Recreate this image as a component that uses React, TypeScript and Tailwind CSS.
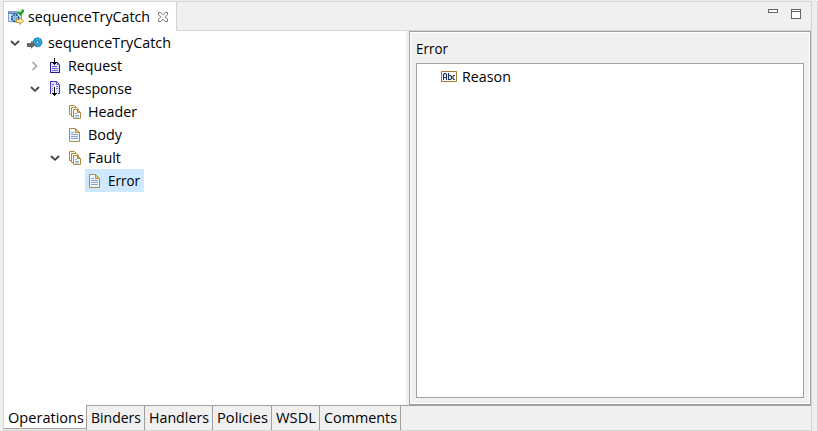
import type { ReactNode } from 'react';

function Label({ text, width }: { text: string; width: number }) {
  return (
    <svg width={width} height="20" className="block shrink-0 overflow-visible">
      <text x="0" y="15" textLength={width} lengthAdjust="spacingAndGlyphs" fill="#000">{text}</text>
    </svg>
  );
}

function Chevron({ open }: { open?: boolean }) {
  return open ? (
    <svg width="10" height="8" viewBox="0 0 10 8" fill="none" className="ml-px block"><path d="M1 2l4 3.8L9 2" stroke="#404040" strokeWidth="1.8" /></svg>
  ) : (
    <svg width="10" height="10" viewBox="0 0 10 10" fill="none" className="block"><path d="M3.5 1l4 4-4 4" stroke="#a6a6a6" strokeWidth="1.6" /></svg>
  );
}

function GearArrow() {
  return (
    <svg width="16" height="16" viewBox="0 0 16 16" className="block">
      <circle cx="10.5" cy="7.2" r="4.3" fill="#168bc8" stroke="#1c84bd" strokeWidth="1.4" strokeDasharray="2.4 .8" />
      <circle cx="10.5" cy="7.2" r="3.4" fill="#35aee4" />
      <circle cx="10.5" cy="7.2" r="1.5" fill="#d9edf5" stroke="#12628c" />
      <path d="M0 8h4V5.8l4.5 4-4.5 4V12H0z" fill="#666" />
    </svg>
  );
}

function MessageIcon({ out }: { out?: boolean }) {
  return (
    <svg width="16" height="16" viewBox="-1 0 16 16" className="block" shapeRendering="crispEdges">
      {out ? (
        <>
          <path d="M2.5.5h6l3 3v9h-9z" fill="#e2e2ff" stroke="#4038c8" />
          <path d="M8.5.5v3h3M4 3.5h2M4 5.5h2M8 5.5h2M4 7.5h2M8 7.5h2M4 9.5h2" fill="none" stroke="#7771d8" />
          <path d="M5 5h3v7h2v2H9v1H8v1H5v-1H4v-1H3v-2h2z" fill="#fff" />
          <path d="M6 6h1v6h2v1H8v1H7v1H6v-1H5v-1H4v-1h2z" fill="#000" />
        </>
      ) : (
        <>
          <path d="M2.5 4.5h7l2 2v8h-9z" fill="#e2e2ff" stroke="#241c9b" />
          <path d="M9.5 4.5v2h2M4 8.5h5M4 10.5h6M4 12.5h6" fill="none" stroke="#6e66d2" />
          <path d="M6 0h1v4h2v1H8v1H7v1H6V6H5V5H4V4h2z" fill="#000" />
        </>
      )}
    </svg>
  );
}

function DocumentIcon() {
  return (
    <svg width="16" height="16" viewBox="0 0 16 16" className="block overflow-visible">
      <path d="M2.5 1.5h6l4 4v9h-10z" fill="#f1f7ff" stroke="#a78b4e" />
      <path d="M8.5 1.5v4h4z" fill="#e6c46e" stroke="#b89140" />
      <path d="M4 5.5h3M4 7.5h7M4 9.5h7M4 11.5h7" stroke="#86a4d2" />
    </svg>
  );
}

function DocumentsIcon() {
  return (
    <svg width="16" height="16" viewBox="-1 0 16 16" className="block" fill="#fff9e8" stroke="#b18a42">
      <path d="M1.5 1.5h5l2 2v7h-7z" />
      <path d="M3.5 3.5h5l2 2v7h-7z" />
      <path d="M5.5 5.5h4l3 3v6h-7z" fill="#f6faff" />
      <path d="M9.5 5.5v3h3z" fill="#d9ae50" />
      <path d="M7 9.5h2M7 11.5h4M7 13h4" stroke="#789bd0" strokeWidth=".8" />
    </svg>
  );
}

function TabIcon() {
  return (
    <svg width="16" height="16" viewBox="0 0 16 16" className="block">
      <path d="M.5 2.5h13v10H.5z" fill="#dce9f7" stroke="#7e9dcd" />
      <path d="M0 2h12v3H0z" fill="#6684c2" />
      <path d="M1 3h9" stroke="#9eb8e3" />
      <circle cx="7.2" cy="9" r="3.4" fill="#d9efff" stroke="#28639e" strokeWidth="2" strokeDasharray="2.2 .5" />
      <circle cx="7.2" cy="9" r="1.2" fill="#fff" stroke="#3f82bb" />
      <path d="M10 0h6v6h-6z" fill="#d9f3d7" />
      <path d="M10.5 3l2 2.3L15.5 1" fill="none" stroke="#129b20" strokeWidth="2.2" />
      <path d="M8.5 10.5h3v-2l4 3.7-4 3.3v-2h-3z" fill="#ffeab0" stroke="#c99332" />
    </svg>
  );
}

interface RowProps {
  text: string;
  width: number;
  icon: ReactNode;
  indent: string;
  open?: boolean;
  leaf?: boolean;
  selected?: boolean;
}

function TreeRow({ text, width, icon, indent, open, leaf, selected }: RowProps) {
  return (
    <div className={`flex h-[23px] items-center ${indent}`}>
      <div className="flex w-[17px] shrink-0 items-center">{!leaf && <Chevron open={open} />}</div>
      <div className={`flex h-[23px] items-center ${selected ? 'bg-[#cde8ff] pl-px pr-[4px]' : ''}`}>
        <div className="ml-px mr-[5px] w-4">{icon}</div>
        <Label text={text} width={width} />
      </div>
    </div>
  );
}

const pages = [
  { text: 'Binders', width: 50, box: 'w-[58px]' },
  { text: 'Handlers', width: 60, box: 'w-[68px]' },
  { text: 'Policies', width: 51, box: 'w-[59px]' },
  { text: 'WSDL', width: 40, box: 'w-[48px]' },
  { text: 'Comments', width: 73, box: 'w-[81px]' },
];

export default function App() {
  return (
    <div className="flex h-[431px] w-[818px] overflow-hidden bg-[#eee] pl-[3px] pt-px font-['Open_Sans','Noto_Sans',sans-serif] text-[15px]">
      <div className="flex h-[430px] w-[809px] shrink-0 flex-col border border-[#d5d5d5]">
        <header className="flex h-[29px] shrink-0">
          <div className="flex w-[173px] items-center border-r border-[#d5d5d5] bg-white pl-1">
            <TabIcon />
            <div className="ml-[4px] mt-px"><Label text="sequenceTryCatch" width={122} /></div>
            <svg width="12" height="12" viewBox="0 0 12 12" className="ml-[7px]">
              <path d="M1.5 1.5h2.3L6 3.8l2.2-2.3h2.3v2.2L8.2 6l2.3 2.2v2.3H8.2L6 8.2l-2.2 2.3H1.5V8.2L3.8 6 1.5 3.7z" fill="white" stroke="#777" />
            </svg>
          </div>
          <div className="flex grow items-start justify-end border-b border-[#d5d5d5] bg-[#f0f0f0] pr-[10px] pt-[7px]">
            <svg width="34" height="11" fill="white" stroke="#666" shapeRendering="crispEdges">
              <path d="M1.5.5h9v3h-9zM24.5.5h9v9h-9zM24.5 2.5h9" />
            </svg>
          </div>
        </header>
        <main className="flex h-[374px] shrink-0 bg-white">
          <section className="w-[402px] shrink-0">
            <TreeRow text="sequenceTryCatch" width={123} indent="pl-[5px]" icon={<GearArrow />} open />
            <TreeRow text="Request" width={54} indent="pl-[25px]" icon={<MessageIcon />} />
            <TreeRow text="Response" width={64} indent="pl-[25px]" icon={<MessageIcon out />} open />
            <TreeRow text="Header" width={49} indent="pl-[45px]" icon={<DocumentsIcon />} leaf />
            <TreeRow text="Body" width={34} indent="pl-[45px]" icon={<DocumentIcon />} leaf />
            <TreeRow text="Fault" width={33} indent="pl-[45px]" icon={<DocumentsIcon />} open />
            <TreeRow text="Error" width={32} indent="pl-[64px]" icon={<DocumentIcon />} leaf selected />
          </section>
          <div className="w-[3px] bg-[#f0f0f0]" />
          <section className="flex grow flex-col border border-[#a0a0a8] bg-white p-px">
            <div className="flex grow flex-col bg-[#f0f0f0] pb-[5px] pl-[5px] pr-[5px]">
              <div className="h-[30px] pt-[6px]"><Label text="Error" width={32} /></div>
              <div className="grow border border-[#a0a0a0] bg-white pl-6 pt-[3px]">
                <div className="flex items-center">
                  <svg width="16" height="11" viewBox="0 0 16 11" className="mb-px mr-[5px] block">
                    <path d="M.5.5h15v10H.5z" fill="#fff" stroke="#a77b27" />
                    <path d="M.5 10.5V.5" stroke="#617aac" />
                    <path d="M2.5 9V3.5l1-1h1l1 1V9M3 6.5h2M7.5 2v6.5h2l1-1v-2l-1-1h-2M14 4.5h-1.2l-.8 1v2l.8 1H14" fill="none" stroke="#19345f" strokeWidth="1.15" />
                  </svg>
                  <Label text="Reason" width={49} />
                </div>
              </div>
            </div>
          </section>
        </main>
        <footer className="flex h-[25px] bg-[#f0f0f0]">
          <div className="h-[24px] w-[82px] border-b border-[#a0a0a0] bg-white pl-[4px] pt-[3px]"><Label text="Operations" width={76} /></div>
          <div className="flex grow border-l border-t border-[#a0a0a0]">
            {pages.map((page) => (
              <div key={page.text} className={`border-r border-[#a0a0a0] pl-1 pt-[2px] ${page.box}`}><Label text={page.text} width={page.width} /></div>
            ))}
          </div>
        </footer>
      </div>
      <div className="ml-[5px] w-px bg-[#d5d5d5]" />
    </div>
  );
}
